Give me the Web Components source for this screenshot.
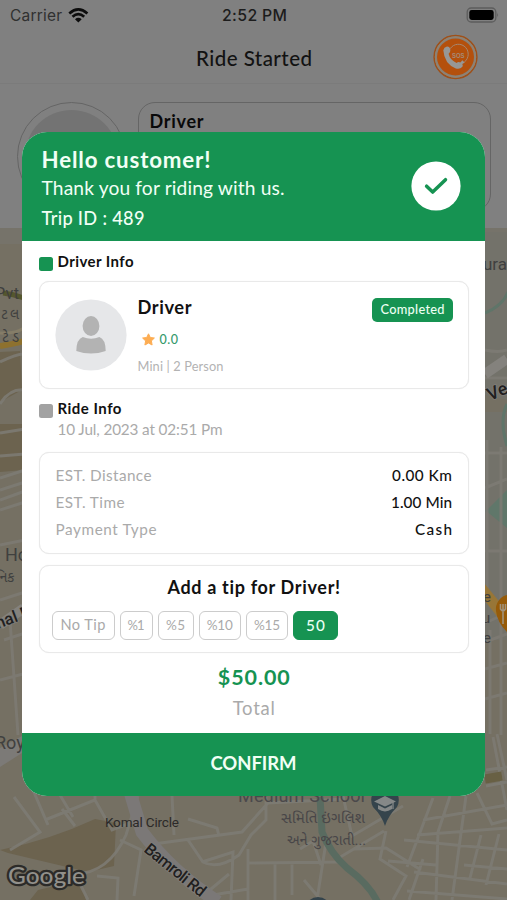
<!DOCTYPE html>
<html lang="en">
<head>
<meta charset="utf-8">
<title>Ride Started</title>
<style>
html,body{margin:0;height:900px;overflow:hidden;background:#808080}
body{font-family:Lato,"Liberation Sans",sans-serif}
</style>
</head>
<body>
<ride-screen></ride-screen>
<script>
const define=(name,html,ready)=>customElements.define(name,class extends HTMLElement{
  connectedCallback(){
    if(this.shadowRoot)return;
    const t=document.createElement('template');
    t.innerHTML=html;
    this.attachShadow({mode:'open'}).append(t.content.cloneNode(true));
    if(ready)ready(this,this.shadowRoot);
  }
});

/* One line of text; "w" tracks the line out to a given width. */
define('ui-text',`<style>
:host{display:block;white-space:nowrap;line-height:26px;width:max-content}
span{display:inline-block}
</style><span><slot></slot></span>`,(el,root)=>{
  const size=el.getAttribute('size');
  if(size)el.style.fontSize=size+'px';
  const w=+el.getAttribute('w');
  if(w){
    const s=root.querySelector('span');
    const n=[...el.textContent].length;
    const gap=(w-s.getBoundingClientRect().width)/(n-1);
    s.style.letterSpacing=gap+'px';
    s.style.marginRight=-gap+'px';
  }
});

define('status-bar',`<style>
:host{display:flex;height:30px;align-items:center;justify-content:space-between;padding:1px 8px 0 10px;box-sizing:border-box;color:#1c1c1c;font-family:Inter,Roboto,sans-serif}
.l{display:flex;gap:6px;align-items:center;width:210px}
.r{display:flex;justify-content:flex-end;width:210px}
.time{font-weight:500}
svg{display:block;margin-top:-1px}
</style>
<div class="l"><ui-text size="15.5" w="52" style="color:#303030">Carrier</ui-text>
<svg width="21" height="17" viewBox="0 0 21 17"><g fill="none" stroke="#0c0c0c" stroke-width="2.7"><path d="M1.3 6.4Q10.3-1.7 19.4 6.4"/><path d="M4.5 9.8Q10.3 4.6 16.2 9.8"/></g><path d="M10.3 15.6 7 12.2Q10.3 9.3 13.7 12.2Z" fill="#0c0c0c"/></svg></div>
<ui-text class="time" size="15.8" w="65">2:52 PM</ui-text>
<div class="r"><svg width="34" height="18" viewBox="0 0 34 18"><rect x="2.2" y="2" width="28.6" height="14" rx="4" fill="none" stroke="#5c5c5c" stroke-width="1.3"/><rect x="4.3" y="4" width="24.4" height="10" rx="2.4" fill="#000"/><path d="M32.2 6.8q1.8 2.2 0 4.4z" fill="#5c5c5c"/></svg></div>`);

define('title-bar',`<style>
:host{display:grid;grid-template-columns:1fr auto 1fr;height:54px;box-sizing:border-box;padding:0 29px 0 30px;align-items:center;color:#121212;border-bottom:1px solid #7b7b7b}
ui-text{margin-top:2px}
svg{justify-self:end;display:block}
</style><i></i><ui-text size="20.5" w="116" style="font-weight:500">Ride Started</ui-text>
<svg width="45" height="46" viewBox="0 0 45 46"><circle cx="22.5" cy="23" r="21.4" fill="none" stroke="#9e5019" stroke-width="1.5"/><circle cx="22.5" cy="23" r="19.7" fill="none" stroke="#8e8273" stroke-width="1.9"/><circle cx="22.5" cy="23" r="18.5" fill="#b4500c"/>
<path d="M17.2 14.7C20.5 9.3 28.5 8.7 32.8 13.6C37.2 18.8 35.3 26.8 29 29.6" fill="none" stroke="#a58770" stroke-width="1"/>
<path d="M10.3 16.2Q10.8 13.5 14 12.6Q16.7 12.4 17.4 16Q17.5 18.4 15.6 19.8Q17 26.2 23.6 28.9Q25.4 27.2 27.4 28.6Q30.7 30.7 29.4 32.7Q27 35.6 22.8 34.4Q11.3 29.8 10.3 16.2Z" fill="#979795"/>
<path d="M24 32.8 29.3 26.3 31.6 28.6Z" fill="#979795"/>
<text x="25.3" y="24" font-family="Liberation Sans,sans-serif" font-weight="bold" font-size="8" text-anchor="middle" textLength="12.5" lengthAdjust="spacingAndGlyphs" fill="#a58a78">SOS</text></svg>`);

define('trip-strip',`<style>
:host{display:flex;height:144px;box-sizing:border-box;padding:17.5px 16px 0 17px;gap:12px;color:#090909}
.a{width:109px;height:109px;border:1px solid #656565;border-radius:50%;box-sizing:border-box;padding:7px}
.a div{height:100%;border-radius:50%;background:#737373}
.b{flex:1;height:109px;border:1px solid #656565;border-radius:17px;box-sizing:border-box;padding:5.5px 10.5px}
</style><div class="a"><div></div></div><div class="b"><ui-text size="18" w="54" style="font-weight:700">Driver</ui-text></div>`);

define('city-map',`<style>:host{display:block;height:672px}svg{display:block}text{font-family:Roboto,"Noto Sans Gujarati","Noto Sans",sans-serif}</style>
<svg width="507" height="672" viewBox="0 228 507 672">
<rect y="228" width="507" height="672" fill="#757063"/>
<path d="M0 228H507V270L440 244H0Z" fill="#76736a"/>
<path d="M0 352 20 351 22 390 0 402ZM0 424H24V470L0 472ZM0 850Q50 840 95 819L116 823 114 866 88 872 8 853ZM38 890 80 880 86 900H30Z" fill="#6c634f"/>
<path d="M485 232H507V400L485 395ZM485 412H507V640H485Z" fill="#73726a"/>
<path d="M485 512 507 490V528L485 510Z" fill="#60776a"/>
<path d="M485 313Q503 306 509 290M507 404Q499 420 507 446" fill="none" stroke="#5f7569" stroke-width="3"/>
<g fill="none" stroke="#7e7b74" stroke-width="3" opacity=".85">
<path d="M0 362Q18 353 25 354V390Q10 388 0 404M0 433 25 429M0 456 25 454M0 478 25 470M0 490 25 482M0 500 25 491M0 510 25 502M0 545 25 540M0 600 25 592M4 640 25 633M10 620 18 735M0 680 23 674"/>
<path d="M14 797 40 832 10 850M30 783 48 825M45 820 95 800 95 786M60 795 73 817M62 809 75 826M95 800 112 830 138 820M138 796 126 835Q109 873 75 874L88 900M97 876 118 878 117 900M120 840 141 850 134 896M146 845 242 832 268 803 345 799M172 796 174 835M188 819 217 828 219 836M188 840 203 862Q218 870 239 855L251 835 266 820 266 797M202 862 233 852 231 900M205 894 229 874M213 895 248 889 248 863 342 862M248 849 248 900M275 900 275 862M300 849 313 841 321 865M292 895V862M304 880 320 899M317 900 326 842M343 796 352 836 403 806M337 859 384 831M354 849 386 848 421 870M386 831 380 859 406 876 393 900M409 900 423 859M388 861 436 865M404 840 507 850M414 872 507 884M407 891 507 899M433 798 407 867M450 796 438 832 436 900M466 796 452 900M477 793 492 824 507 820M486 770 507 767M486 786 507 782M493 737 507 810M497 734 507 780M417 835 507 828M423 820 507 805M464 865 507 869M470 878 481 835M486 885 499 834"/>
<path d="M485 350Q499 353 507 350M485 378H507M485 453H507M487 440V600M501 447V735M485 488 507 479M485 623 507 613M485 642 507 634M485 669 507 663M485 699 507 693M490 630V734M485 551H507"/>
</g>
<path d="M130 792 142 832Q172 872 218 902" fill="none" stroke="#7b7877" stroke-width="13"/>
<path d="M485 374 507 359M0 625 24 608" fill="none" stroke="#84827d" stroke-width="10"/>
<path d="M0 333Q15 334 24 328" fill="none" stroke="#857d68" stroke-width="3"/>
<path d="M0 346Q14 344 24 341" fill="none" stroke="#8e712e" stroke-width="6"/>
<path d="M3 293Q13 294 24 298" fill="none" stroke="#55562e" stroke-width="5"/>
<path d="M485 779 502 776" fill="none" stroke="#686044" stroke-width="9"/>
<path d="M0 748 22 736V753L0 767Z" fill="#7c7a77"/>
<path d="M320 797 322 832Q330 853 347 868Q370 885 378 903" fill="none" stroke="#596b60" stroke-width="7"/>
<path d="M484 583 507 611V629L485 601Z" fill="#987637"/>
<g fill="#40403f" font-size="16">
<text x="-5" y="299" textLength="24">Pvt</text><text x="-10" y="319" font-size="14" textLength="29">ગટલ</text><text x="-10" y="342" font-size="14" textLength="29">મેટેડ</text>
<text x="483" y="270" font-size="17">ura</text><text x="5" y="561" font-size="18">Ho</text><text x="-4" y="582" font-size="14">નિક</text>
<text x="-5" y="749" font-size="18">Roy</text>
<text x="483" y="602" font-size="15">e</text><text x="482" y="623" font-size="15">u</text><text x="483" y="643" font-size="15">e</text>
</g>
<g fill="#211f1f" stroke="#827f7b" stroke-width="1.4" paint-order="stroke" font-weight="500" font-size="16.5">
<text transform="translate(-2 629)rotate(-21)">nal Rd</text><text transform="translate(490 401)rotate(-23)" font-size="18">Ves</text>
<text transform="translate(143 851)rotate(39)" textLength="74">Bamroli Rd</text></g>
<text x="105" y="827" font-size="13.5" fill="#2c2a29" textLength="74">Komal Circle</text>
<text x="238" y="802" font-size="18" fill="#4b494b" textLength="127">Medium School</text>
<g font-size="14" fill="#484648"><text x="281" y="823" textLength="84" lengthAdjust="spacingAndGlyphs">સમિતિ ઇંગલિશ</text><text x="287" y="845" textLength="79" lengthAdjust="spacingAndGlyphs">અને ગુજરાતી...</text></g>
<path d="M385 826Q382 816 373 807A13.8 13.8 0 1 1 397 807Q388 816 385 826Z" fill="#35444c"/>
<path d="M374 801.5 385 796 396 801.5 385 806.5ZM378 805 385 808.6 392 805V809Q385 813.8 378 809Z" fill="#858888"/><path d="M393 802V809" stroke="#858888" stroke-width="1.3"/>
<path d="M507 595A14.5 14.5 0 0 0 496 611Q497 622 507 632Z" fill="#965b09"/><path d="M503 604V624M500.5 604V609Q503 613 505.5 609V604" fill="none" stroke="#a1937c" stroke-width="1.6"/>
<circle cx="318" cy="910" r="13" fill="#35444c"/>
<text x="8" y="884" style="font-family:Lato,sans-serif" font-weight="500" font-size="23" textLength="77" lengthAdjust="spacingAndGlyphs" fill="#92908b" stroke="#2c2b29" stroke-width="4.5" stroke-linejoin="round" paint-order="stroke">Google</text>
</svg>`);

define('modal-header',`<style>
:host{display:flex;height:109px;box-sizing:border-box;padding:14.5px 24px 0 19.5px;justify-content:space-between;color:#f1fff5;background:#169352}
.t{display:grid;grid-template-rows:28px 30px 26px}
svg{margin-top:14.5px}
</style><div class="t"><ui-text size="22.3" w="169" style="font-weight:700">Hello customer!</ui-text><ui-text size="19.2" w="243">Thank you for riding with us.</ui-text><ui-text size="18.2" w="103" style="font-weight:500">Trip ID : 489</ui-text></div>
<svg width="50" height="50" viewBox="0 0 50 50"><circle cx="25" cy="25" r="24.6" fill="#fff"/><path d="M15.6 25.2 21.7 31.1 34.5 18.7" fill="none" stroke="#169352" stroke-width="3.5" stroke-linecap="round" stroke-linejoin="round"/></svg>`);

define('section-label',`<style>
:host{display:flex;gap:5px;color:#111;font-weight:700;height:26px}
i{width:14px;height:14px;border-radius:2.5px;background:var(--mark);margin-top:9px}
</style><i></i><slot></slot>`);

define('info-card',`<style>:host{display:block;box-sizing:border-box;border:1px solid #e9e9e9;border-radius:10px;background:#fff;box-shadow:0 0 1px #e5e5e5}</style><slot></slot>`);

define('driver-row',`<style>
:host{display:flex;padding:17px 15px 0 15px;align-items:flex-start}
.m{flex:1;margin-left:11px;display:grid;grid-template-rows:33px 26px 26px;margin-top:-5px}
.s{display:flex;gap:5px;padding-left:4px;color:#35996b;align-items:center}
.g{color:#b3b3b3}
.b{width:81px;height:24px;border-radius:5px;background:#169352;color:#ecfff3;display:flex;justify-content:center;margin-top:-1px}
.b ui-text{line-height:22px}
svg{display:block}
</style>
<svg width="72" height="72" viewBox="0 0 72 72"><circle cx="36" cy="36" r="35.6" fill="#e6e7e9"/><ellipse cx="36" cy="27" rx="8.4" ry="10" fill="#b3b3b3"/><path d="M21.3 52Q21.5 40 27.8 38Q36 41.5 44.4 38Q50.5 40 50.7 52Q36 57 21.3 52Z" fill="#b3b3b3"/></svg>
<div class="m"><ui-text size="18.3" w="54" style="font-weight:700;color:#111">Driver</ui-text>
<div class="s"><svg width="13" height="13" viewBox="0 0 13 13"><path d="M6.5.8 8.3 4.5 12.4 5 9.4 7.9 10.1 12 6.5 10 2.9 12 3.6 7.9.6 5 4.7 4.5Z" fill="#fdad53" stroke="#fdad53" stroke-linejoin="round"/></svg><ui-text size="12.5" w="18.5" style="font-weight:500">0.0</ui-text></div>
<ui-text class="g" size="12.8" w="86">Mini | 2 Person</ui-text></div>
<div class="b"><ui-text size="12.8" w="64" style="font-weight:500">Completed</ui-text></div>`);

define('fare-row',`<style>:host{display:flex;justify-content:space-between;color:#aaa;height:27px;padding:0 16px}</style><slot name="k"></slot><slot name="v"></slot>`);

define('tip-chip',`<style>
:host{display:flex;justify-content:center;height:29px;box-sizing:border-box;border:1.3px solid #ccc;border-radius:6px;color:#aaa}
:host([on]){background:#169352;border-color:#169352;color:#eafff2;font-weight:500}
</style><slot></slot>`);

define('ride-receipt',`<style>
:host{display:block;width:463px;height:664px;border-radius:25px;overflow:hidden;background:#fff}
.body{height:492px;padding:0 16px 0 16.5px;box-sizing:border-box;overflow:hidden}
section-label.a{margin-top:7px;--mark:#169352}
section-label.b{margin-top:6px;--mark:#a2a2a2}
.d{height:108px;margin-top:6.5px}
.date{margin-left:19px;margin-top:-5px;color:#aaa}
.f{height:102px;margin-top:10.5px;padding-top:9px}
.t{height:88px;margin-top:11px;padding-top:7.5px}
.t>ui-text{margin:0 auto;font-weight:700;color:#111}
.chips{display:flex;gap:5px;padding:11px 12px 0}
.amt{margin:11px auto 0;color:#169352;font-weight:700}
.tot{margin:5px auto 0;color:#aaa}
.go{height:63px;background:#169352;color:#f1fff5;display:flex;justify-content:center;padding-top:17px;box-sizing:border-box;font-weight:700}
.v{font-weight:500;color:#111}
</style>
<modal-header></modal-header>
<div class="body">
<section-label class="a"><ui-text size="15" w="76">Driver Info</ui-text></section-label>
<info-card class="d"><driver-row></driver-row></info-card>
<section-label class="b"><ui-text size="15" w="64">Ride Info</ui-text></section-label>
<ui-text class="date" size="15.3" w="165">10 Jul, 2023 at 02:51 Pm</ui-text>
<info-card class="f">
<fare-row><ui-text slot="k" size="15.3" w="96">EST. Distance</ui-text><ui-text slot="v" class="v" size="15.3" w="60">0.00 Km</ui-text></fare-row>
<fare-row><ui-text slot="k" size="15.3" w="69">EST. Time</ui-text><ui-text slot="v" class="v" size="15.3" w="61">1.00 Min</ui-text></fare-row>
<fare-row><ui-text slot="k" size="15.3" w="101">Payment Type</ui-text><ui-text slot="v" class="v" size="15.3" w="37">Cash</ui-text></fare-row>
</info-card>
<info-card class="t"><ui-text size="18" w="173">Add a tip for Driver!</ui-text>
<div class="chips">
<tip-chip style="width:63px"><ui-text size="14.6" w="45">No Tip</ui-text></tip-chip>
<tip-chip style="width:33px"><ui-text size="13" w="17">%1</ui-text></tip-chip>
<tip-chip style="width:36px"><ui-text size="13.5" w="19">%5</ui-text></tip-chip>
<tip-chip style="width:42.5px"><ui-text size="13.5" w="26">%10</ui-text></tip-chip>
<tip-chip style="width:42px"><ui-text size="13.5" w="26">%15</ui-text></tip-chip>
<tip-chip on style="width:45px"><ui-text size="15.3" w="19">50</ui-text></tip-chip>
</div></info-card>
<ui-text class="amt" size="21.5" w="72">$50.00</ui-text>
<ui-text class="tot" size="18.5" w="42">Total</ui-text>
</div>
<div class="go"><ui-text size="18.5" w="86">CONFIRM</ui-text></div>`);

define('ride-screen',`<style>
:host{display:block;position:relative;width:507px;height:900px;overflow:hidden;background:#808080}
ride-receipt{position:absolute;left:22px;top:132px}
</style><status-bar></status-bar><title-bar></title-bar><trip-strip></trip-strip><city-map></city-map><ride-receipt></ride-receipt>`);
</script>
</body>
</html>
